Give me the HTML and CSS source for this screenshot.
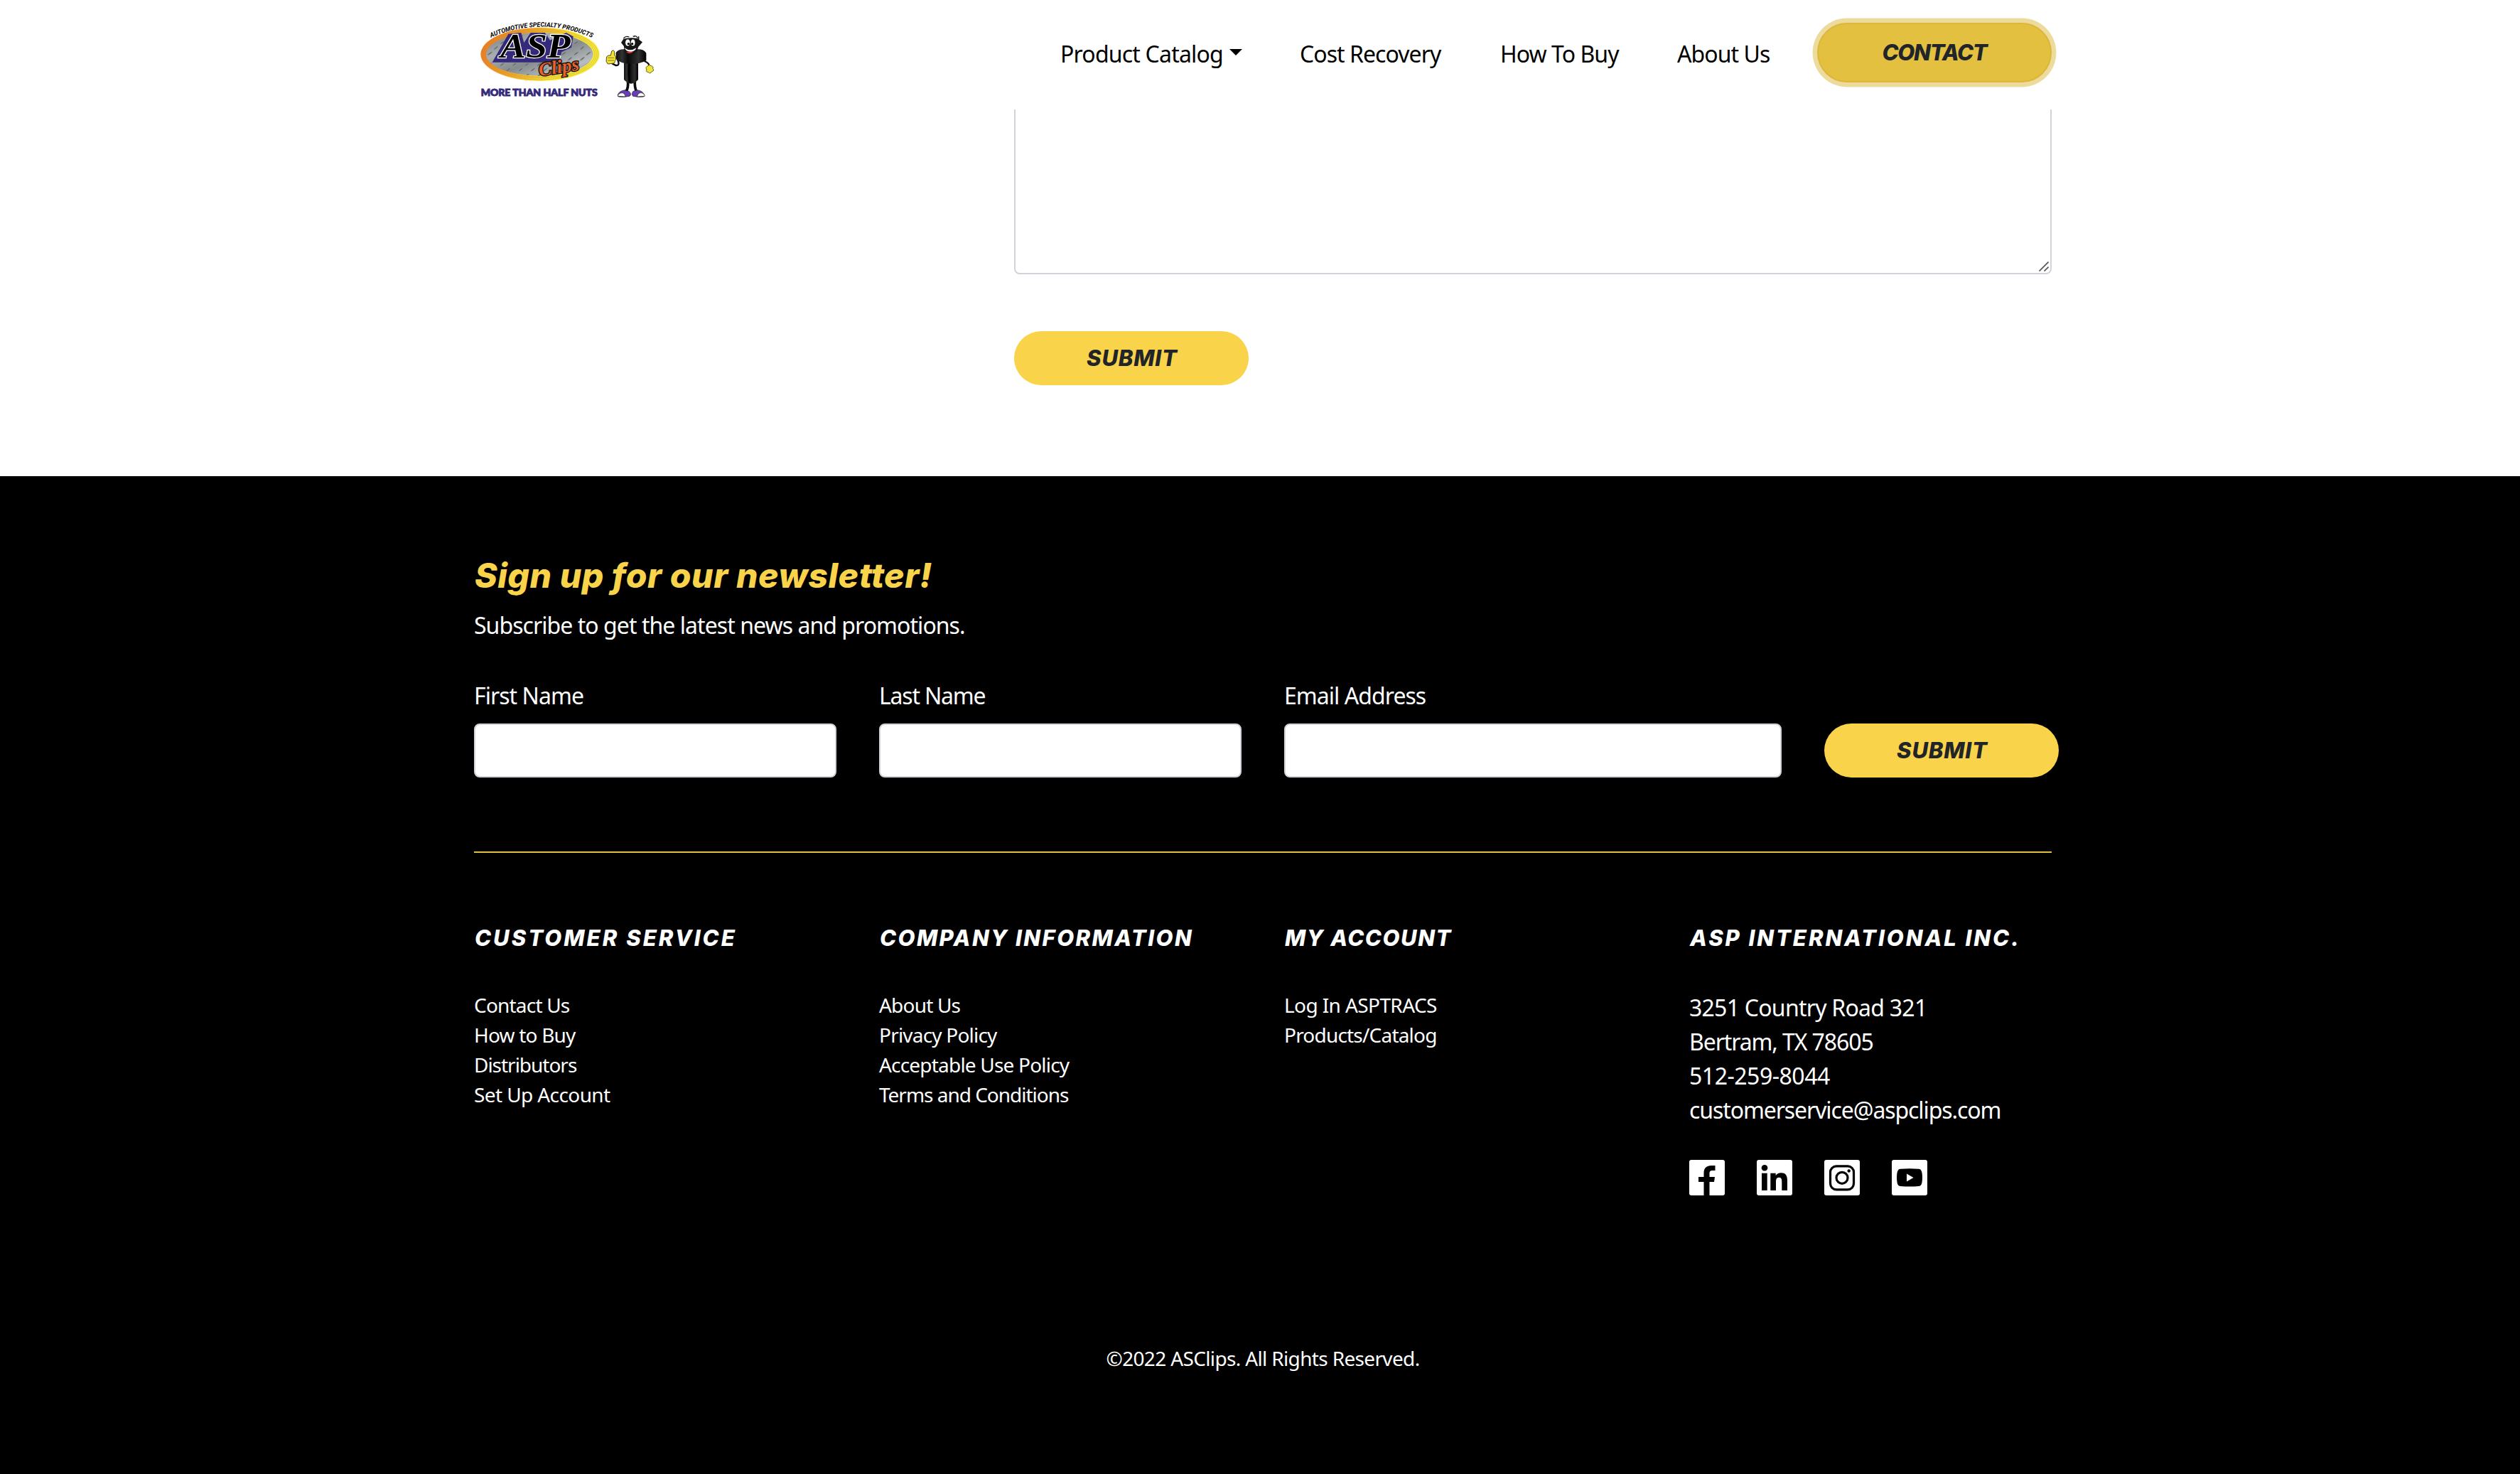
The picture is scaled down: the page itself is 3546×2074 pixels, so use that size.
FILE: index.html
```
<!DOCTYPE html>
<html lang="en">
<head>
<meta charset="utf-8">
<title>ASP Clips - Contact</title>
<link rel="stylesheet" href="styles.css">
</head>
<body>
<header class="header">
  <a class="logo" aria-label="ASP Clips">
    <svg viewBox="0 0 900 420" width="300" height="140">
      <defs>
        <linearGradient id="ring" x1="0" x2="1" y1="0" y2="0.25">
          <stop offset="0" stop-color="#ee7326"/><stop offset="0.4" stop-color="#f5a62c"/><stop offset="0.75" stop-color="#fbe63a"/><stop offset="1" stop-color="#f8ee3c"/>
        </linearGradient>
        <linearGradient id="steel" x1="0" x2="1" y1="0" y2="1">
          <stop offset="0" stop-color="#6f7678"/><stop offset="0.3" stop-color="#a9afb1"/><stop offset="0.55" stop-color="#858b8d"/><stop offset="0.8" stop-color="#b9bdbf"/><stop offset="1" stop-color="#7a8082"/>
        </linearGradient>
        <linearGradient id="body" x1="0" x2="1" y1="0" y2="0">
          <stop offset="0" stop-color="#111"/><stop offset="0.2" stop-color="#333"/><stop offset="0.4" stop-color="#0a0a0a"/><stop offset="0.75" stop-color="#303030"/><stop offset="1" stop-color="#000"/>
        </linearGradient>
        <pattern id="tread" width="52" height="46" patternUnits="userSpaceOnUse">
          <ellipse cx="14" cy="12" rx="13" ry="3" transform="rotate(-38 14 12)" fill="#5b6163" stroke="#c2c6c8" stroke-width="1"/>
          <ellipse cx="40" cy="34" rx="13" ry="3" transform="rotate(-38 40 34)" fill="#5b6163" stroke="#c2c6c8" stroke-width="1"/>
        </pattern>
        <path id="arc" d="M122 128 Q335 38 543 127"/>
      </defs>
      <ellipse cx="330" cy="199" rx="251" ry="113" fill="url(#ring)"/>
      <g fill="none" stroke="#a8761f" stroke-width="1.5" opacity="0.7">
        <ellipse cx="330" cy="199" rx="245" ry="107"/><ellipse cx="330" cy="199" rx="238" ry="101"/><ellipse cx="330" cy="199" rx="231" ry="96"/>
      </g>
      <ellipse cx="328" cy="199" rx="226" ry="91" fill="url(#steel)"/>
      <ellipse cx="328" cy="199" rx="226" ry="91" fill="url(#tread)"/>
      <path d="M128 233 L196 113 L250 108 L262 150 L290 108 L350 108 L372 140 L440 108 L470 124 L462 170 L420 190 L412 233 Z" fill="#34297a"/>
      <text class="logo-asp" x="162" y="212" textLength="296" lengthAdjust="spacingAndGlyphs">ASP</text>
      <text class="logo-clips" transform="translate(328 292) rotate(-9)" textLength="172" lengthAdjust="spacingAndGlyphs">Clips</text>
      <text class="logo-arc"><textPath href="#arc" textLength="440" lengthAdjust="spacingAndGlyphs">AUTOMOTIVE SPECIALTY PRODUCTS</textPath></text>
      <text class="logo-tag" x="80" y="374" textLength="492" lengthAdjust="spacingAndGlyphs">MORE THAN HALF NUTS</text>
      <!-- bolt mascot -->
      <path d="M652 212 Q672 248 650 246 L634 238 M770 228 Q792 236 790 250" fill="none" stroke="#0b0b0b" stroke-width="7"/>
      <path d="M700 312 Q704 340 692 358 M730 312 Q728 340 738 358" fill="none" stroke="#0b0b0b" stroke-width="11"/>
      <path d="M684 228 H744 V306 Q714 340 684 306Z" fill="url(#body)"/>
      <path d="M706 240 Q702 276 708 316" fill="none" stroke="#000" stroke-width="9"/>
      <path d="M650 192 Q660 176 690 178 L744 178 Q768 178 778 194 V226 Q740 246 690 238 Q656 232 650 214Z" fill="url(#body)"/>
      <path d="M672 150 L682 134 Q710 126 740 132 L762 148 L750 162 Q742 168 740 186 Q714 212 686 190 L684 166Z" fill="#161616"/>
      <path d="M682 132 Q692 120 706 126 M722 124 Q738 118 742 132 M746 140 V124" fill="none" stroke="#111" stroke-width="4"/>
      <ellipse cx="700" cy="150" rx="11" ry="15" fill="#fff" stroke="#000" stroke-width="2"/>
      <ellipse cx="722" cy="150" rx="10" ry="15" fill="#fff" stroke="#000" stroke-width="2"/>
      <circle cx="703" cy="155" r="5"/><circle cx="719" cy="155" r="5"/>
      <path d="M686 172 Q710 190 736 172 Q732 188 710 189 Q692 187 686 172Z" fill="#fff"/>
      <path d="M693 190 Q708 185 722 190 Q708 200 693 190Z" fill="#e0392b"/>
      <path d="M632 186 Q642 178 644 190 L644 204 Q654 208 648 216 Q654 222 646 226 Q648 236 636 238 L616 240 Q606 230 610 216 Q610 202 628 204Z" fill="#f3e339" stroke="#4a4608" stroke-width="3"/>
      <path d="M616 214 H642 M616 225 H642" stroke="#4a4608" stroke-width="2"/>
      <path d="M782 250 Q792 240 798 248 Q810 250 806 260 Q814 268 802 272 Q794 284 786 274 Q774 274 780 264 Q772 256 782 250Z" fill="#f3e339" stroke="#6a6410" stroke-width="3"/>
      <path d="M658 370 Q664 354 688 350 L706 356 Q718 368 708 376 Q680 382 660 378Z" fill="#6a3fb5" stroke="#111" stroke-width="2"/>
      <path d="M770 370 Q762 352 738 350 L722 356 Q714 368 722 376 Q750 382 768 378Z" fill="#6a3fb5" stroke="#111" stroke-width="2"/>
      <path d="M658 376 Q660 362 678 362 Q690 366 690 378Z M772 376 Q768 360 752 362 Q740 366 740 378Z" fill="#fff" stroke="#222" stroke-width="2"/>
    </svg>
  </a>
  <nav class="nav">
    <a class="nav-link catalog">Product Catalog<i class="caret"></i></a>
    <a class="nav-link">Cost Recovery</a>
    <a class="nav-link">How To Buy</a>
    <a class="nav-link">About Us</a>
    <a class="btn btn-contact">CONTACT</a>
  </nav>
</header>
<main class="main">
  <div class="message">
    <svg class="grip" viewBox="0 0 14 14" width="14" height="14"><path d="M0.500 13.500L13.500 0.500M7.500 13.500L13.500 7.500" stroke="#555" stroke-width="1.700"/></svg>
  </div>
  <button class="btn">SUBMIT</button>
</main>
<footer class="footer">
  <h2 class="title">Sign up for our newsletter!</h2>
  <p class="lead">Subscribe to get the latest news and promotions.</p>
  <form class="signup">
    <label class="field">First Name<input type="text"></label>
    <label class="field last">Last Name<input type="text"></label>
    <label class="field">Email Address<input type="text"></label>
    <button class="btn" type="button">SUBMIT</button>
  </form>
  <div class="columns">
    <section>
      <h3 class="heading service">CUSTOMER SERVICE</h3>
      <ul class="links"><li>Contact Us</li><li>How to Buy</li><li class="snug">Distributors</li><li class="wide">Set Up Account</li></ul>
    </section>
    <section>
      <h3 class="heading">COMPANY INFORMATION</h3>
      <ul class="links"><li>About Us</li><li>Privacy Policy</li><li>Acceptable Use Policy</li><li class="snug">Terms and Conditions</li></ul>
    </section>
    <section>
      <h3 class="heading account">MY ACCOUNT</h3>
      <ul class="links"><li class="wide">Log In ASPTRACS</li><li>Products/Catalog</li></ul>
    </section>
    <section>
      <h3 class="heading company">ASP INTERNATIONAL INC.</h3>
      <address class="address">
        <div class="street">3251 Country Road 321</div>
        <div class="city">Bertram, TX 78605</div>
        <div class="phone">512-259-8044</div>
        <div class="email">customerservice@aspclips.com</div>
      </address>
      <div class="social">
        <svg viewBox="0 0 50 50"><rect width="50" height="50" rx="3" fill="#fff"/><path d="M20.500 50V31H13V24H20.500V18.500C20.500 11.500 24.500 8 31 8H36.500V15H33C29.500 15 28.500 16.500 28.500 19V24H36L35 31H28.500V50Z"/></svg>
        <svg viewBox="0 0 50 50"><rect width="50" height="50" rx="3" fill="#fff"/><circle cx="11" cy="11.200" r="4.300"/><path d="M7 18.800H14.700V43H7ZM19.300 18.800H26.700V22.200C28 19.800 31 18.200 34.200 18.200C41.500 18.200 43 23 43 29.500V43H35.300V31C35.300 28 35 24.800 31.300 24.800C27.600 24.800 27 28 27 31V43H19.300Z"/></svg>
        <svg viewBox="0 0 50 50"><rect width="50" height="50" rx="3" fill="#fff"/><rect x="8.500" y="8.800" width="33" height="33" rx="8.500" fill="none" stroke="#000" stroke-width="3.200"/><circle cx="25" cy="25.300" r="8" fill="none" stroke="#000" stroke-width="3.200"/><circle cx="34.700" cy="15.500" r="2.200"/></svg>
        <svg viewBox="0 0 50 50"><rect width="50" height="50" rx="3" fill="#fff"/><path d="M12 12.800Q25 11.600 38 12.800C41.500 13.200 42.800 16 43 25C42.800 34 41.500 36.400 38 37Q25 38.200 12 37C8.500 36.400 7.200 34 7 25C7.200 16 8.500 13.200 12 12.800Z"/><path d="M21 19.500L30.500 25L21 30.500Z" fill="#fff"/></svg>
      </div>
    </section>
  </div>
  <p class="copyright">©2022 ASClips. All Rights Reserved.</p>
</footer>
</body>
</html>
```
FILE: styles.css
```
* { box-sizing: border-box; margin: 0; padding: 0; }
body {
  background: #fff;
  color: #000;
  font: 32px/48px "Noto Sans", "Open Sans", sans-serif;
  letter-spacing: -0.95px;
}

.header { display: flex; height: 154px; padding-left: 650px; }
.logo { width: 842px; padding-top: 10px; }
.logo svg { display: block; }
.logo-asp {
  font: italic bold 144px "Liberation Serif", serif;
  letter-spacing: 0;
  fill: #000;
  stroke: #fff;
  stroke-width: 7px;
  paint-order: stroke;
}
.logo-clips {
  font: italic bold 80px "Liberation Serif", serif;
  letter-spacing: 0;
  fill: #e8632a;
  stroke: #17100c;
  stroke-width: 8px;
  paint-order: stroke;
}
.logo-arc { font: italic bold 27px Roboto, sans-serif; letter-spacing: 0; }
.logo-tag {
  font: 900 42px Lato, sans-serif;
  letter-spacing: 0;
  fill: #34297a;
  stroke: #34297a;
  stroke-width: 3px;
}
.nav { display: grid; grid-template-columns: 337px 282px 249px 197px 330px; }
.nav-link { padding-top: 52px; white-space: nowrap; }
.catalog { letter-spacing: -0.8px; }
.caret {
  display: inline-block;
  margin-left: 9px;
  vertical-align: 10px;
  border-top: 9.6px solid #000;
  border-left: 9.6px solid transparent;
  border-right: 9.6px solid transparent;
}

.btn {
  display: flex;
  align-items: center;
  justify-content: center;
  width: 330px;
  height: 76px;
  padding: 0 0 0 2px;
  border: 0;
  border-radius: 38px;
  background: #f9d349;
  color: #212529;
  font: italic 800 31px/38px Inter, sans-serif;
  letter-spacing: 0.86px;
}
.btn-contact {
  height: 84px;
  margin-top: 32px;
  padding: 0;
  border: 2px solid #dbb63a;
  border-radius: 42px;
  background: #e3c03f;
  box-shadow: 0 0 0 6.4px #eddb9d;
  letter-spacing: -1.2px;
}

.main { height: 516px; padding-left: 1427px; }
.message {
  display: flex;
  align-items: flex-end;
  justify-content: flex-end;
  width: 1460px;
  height: 232px;
  margin-bottom: 80px;
  padding: 2px;
  border: 2px solid #ced4da;
  border-top: 0;
  border-radius: 0 0 8px 8px;
}

.footer { height: 1404px; padding: 111px 659px 0 667px; background: #000; color: #fff; }
.title {
  padding-left: 1px;
  color: #f9d349;
  font: italic 800 48px/58px Inter, sans-serif;
  letter-spacing: 0.53px;
}
.lead { margin-top: 17px; }
.signup {
  display: grid;
  grid-template-columns: 510px 510px 700px 330px;
  gap: 60px;
  align-items: end;
  width: 2220px;
  height: 247px;
  margin-top: 49px;
  padding-bottom: 104px;
  border-bottom: 2px solid #e3c03f;
}
.last { letter-spacing: -1.2px; }
.field input {
  display: block;
  width: 100%;
  height: 76px;
  margin-top: 15px;
  border: 2px solid #ced4da;
  border-radius: 8px;
  background: #fff;
}
.columns { display: grid; grid-template-columns: repeat(4, 570px); height: 589px; padding-top: 101px; }
.heading {
  margin-bottom: 54px;
  padding-left: 1px;
  font: italic 800 31px/38px Inter, sans-serif;
  letter-spacing: 2.45px;
  white-space: nowrap;
}
.service { letter-spacing: 3.05px; }
.account { letter-spacing: 1.6px; }
.company { letter-spacing: 2.95px; }
.links { list-style: none; font-size: 28px; line-height: 42px; letter-spacing: -0.8px; }
.snug { letter-spacing: -1.02px; }
.wide { letter-spacing: -0.6px; }
.address { padding-top: 1px; font-style: normal; }
.street { letter-spacing: -0.75px; }
.city { letter-spacing: -1.1px; }
.phone { letter-spacing: -0.49px; }
.email { letter-spacing: -1.09px; }
.social { display: flex; gap: 45px; margin-top: 46px; }
.social svg { display: block; width: 50px; height: 50px; }
.copyright {
  width: 2220px;
  margin-top: 101px;
  font-size: 28px;
  line-height: 42px;
  letter-spacing: -0.65px;
  text-align: center;
}
```
